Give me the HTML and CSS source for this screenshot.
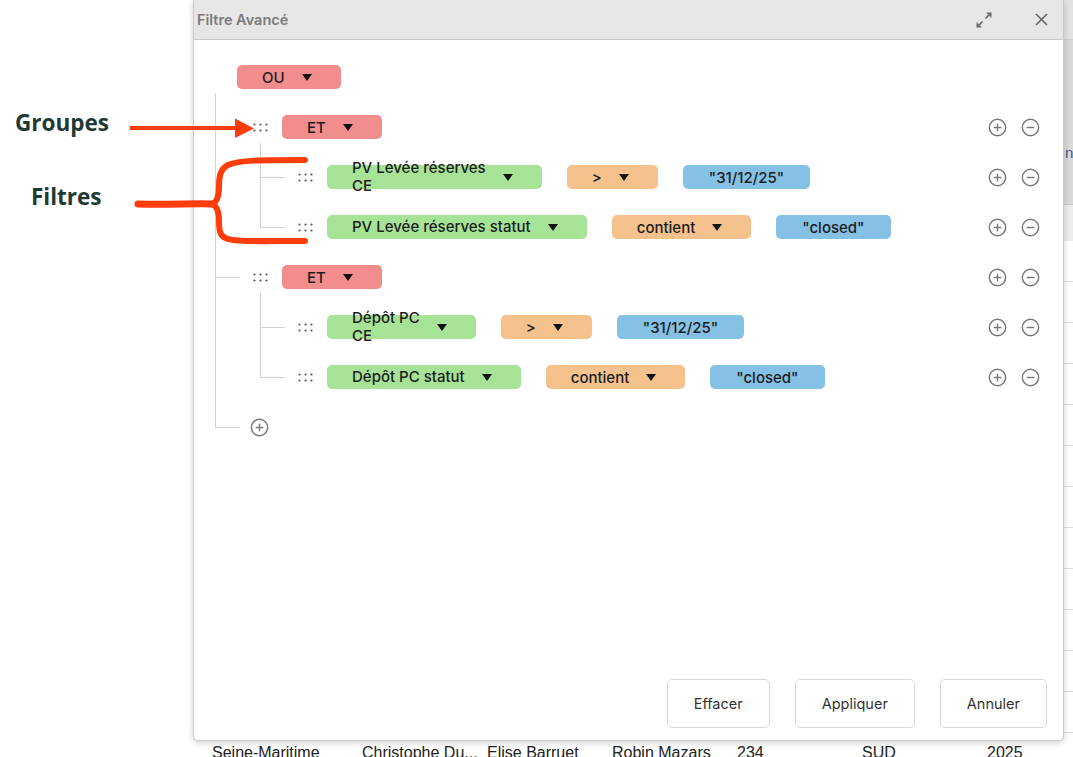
FILE: index.html
```html
<!DOCTYPE html>
<html lang="fr">
  <head>
    <meta charset="UTF-8" />
    <meta name="viewport" content="width=device-width, initial-scale=1.0" />
    <title>Filtre Avancé</title>
    <link rel="stylesheet" href="styles.css">
  </head>
  <body>
    <div class="screen">
      <!-- table behind the modal -->
      <div class="sheet">
        <div class="sheet-head">
          <div class="sheet-head-top"></div>
          <div class="sheet-head-main"><span class="sheet-head-label">n</span></div>
        </div>
        <div class="sheet-sub"></div>
        <div class="sheet-line"></div>
        <div class="sheet-line"></div>
        <div class="sheet-line"></div>
        <div class="sheet-line"></div>
        <div class="sheet-line"></div>
        <div class="sheet-line"></div>
        <div class="sheet-line"></div>
        <div class="sheet-line"></div>
        <div class="sheet-line"></div>
        <div class="sheet-line"></div>
        <div class="sheet-line"></div>
        <div class="sheet-line"></div>
        <div class="sheet-line sheet-line-last">
          <span class="cell cell-wide">Seine-Maritime</span>
          <span class="cell">Christophe Du...</span>
          <span class="cell">Elise Barruet</span>
          <span class="cell">Robin Mazars</span>
          <span class="cell">234</span>
          <span class="cell">SUD</span>
          <span class="cell">2025</span>
        </div>
      </div>

      <section class="dialog">
        <header class="dialog-header">
          <span class="dialog-title">Filtre Avancé</span>
          <div class="dialog-tools">
            <svg class="tool-expand" width="18" height="18" viewBox="0 0 18 18">
              <line x1="10.5" y1="7.5" x2="15" y2="3" />
              <polygon points="11,1.5 16.5,1.5 16.5,7" />
              <line x1="7.5" y1="10.5" x2="3" y2="15" />
              <polygon points="1.5,11 1.5,16.5 7,16.5" />
            </svg>
            <svg class="tool-close" width="13" height="13" viewBox="0 0 13 13">
              <line x1="1" y1="1" x2="12" y2="12" />
              <line x1="12" y1="1" x2="1" y2="12" />
            </svg>
          </div>
        </header>

        <div class="dialog-body">
          <div class="root-row">
            <span class="pill pill-group">OU <i class="caret"></i></span>
          </div>

          <ul class="tree">
            <li>
              <div class="tree-row">
                <svg class="handle" width="15" height="9" viewBox="0 0 15 9"><circle cx="1.5" cy="1.5" r="1.1"/><circle cx="7.5" cy="1.5" r="1.1"/><circle cx="13.5" cy="1.5" r="1.1"/><circle cx="1.5" cy="7.5" r="1.1"/><circle cx="7.5" cy="7.5" r="1.1"/><circle cx="13.5" cy="7.5" r="1.1"/></svg>
                <span class="pill pill-group">ET <i class="caret"></i></span>
                <div class="row-actions">
                  <svg class="circle-icon" width="19" height="19" viewBox="0 0 20 20"><circle cx="10" cy="10" r="8.6"/><line x1="10" y1="6" x2="10" y2="14"/><line x1="6" y1="10" x2="14" y2="10"/></svg>
                  <svg class="circle-icon" width="19" height="19" viewBox="0 0 20 20"><circle cx="10" cy="10" r="8.6"/><line x1="6" y1="10" x2="14" y2="10"/></svg>
                </div>
              </div>
              <ul class="tree tree-sub">
                <li>
                  <div class="tree-row">
                    <svg class="handle" width="15" height="9" viewBox="0 0 15 9"><circle cx="1.5" cy="1.5" r="1.1"/><circle cx="7.5" cy="1.5" r="1.1"/><circle cx="13.5" cy="1.5" r="1.1"/><circle cx="1.5" cy="7.5" r="1.1"/><circle cx="7.5" cy="7.5" r="1.1"/><circle cx="13.5" cy="7.5" r="1.1"/></svg>
                    <div class="filter">
                      <span class="pill pill-field"><span class="pill-text">PV Levée réserves<br>CE</span> <i class="caret"></i></span>
                      <span class="pill pill-op">&gt; <i class="caret"></i></span>
                      <span class="pill pill-value">"31/12/25"</span>
                    </div>
                    <div class="row-actions">
                      <svg class="circle-icon" width="19" height="19" viewBox="0 0 20 20"><circle cx="10" cy="10" r="8.6"/><line x1="10" y1="6" x2="10" y2="14"/><line x1="6" y1="10" x2="14" y2="10"/></svg>
                      <svg class="circle-icon" width="19" height="19" viewBox="0 0 20 20"><circle cx="10" cy="10" r="8.6"/><line x1="6" y1="10" x2="14" y2="10"/></svg>
                    </div>
                  </div>
                </li>
                <li>
                  <div class="tree-row">
                    <svg class="handle" width="15" height="9" viewBox="0 0 15 9"><circle cx="1.5" cy="1.5" r="1.1"/><circle cx="7.5" cy="1.5" r="1.1"/><circle cx="13.5" cy="1.5" r="1.1"/><circle cx="1.5" cy="7.5" r="1.1"/><circle cx="7.5" cy="7.5" r="1.1"/><circle cx="13.5" cy="7.5" r="1.1"/></svg>
                    <div class="filter">
                      <span class="pill pill-field"><span class="pill-text">PV Levée réserves statut</span> <i class="caret"></i></span>
                      <span class="pill pill-op">contient <i class="caret"></i></span>
                      <span class="pill pill-value">"closed"</span>
                    </div>
                    <div class="row-actions">
                      <svg class="circle-icon" width="19" height="19" viewBox="0 0 20 20"><circle cx="10" cy="10" r="8.6"/><line x1="10" y1="6" x2="10" y2="14"/><line x1="6" y1="10" x2="14" y2="10"/></svg>
                      <svg class="circle-icon" width="19" height="19" viewBox="0 0 20 20"><circle cx="10" cy="10" r="8.6"/><line x1="6" y1="10" x2="14" y2="10"/></svg>
                    </div>
                  </div>
                </li>
              </ul>
            </li>

            <li>
              <div class="tree-row">
                <svg class="handle" width="15" height="9" viewBox="0 0 15 9"><circle cx="1.5" cy="1.5" r="1.1"/><circle cx="7.5" cy="1.5" r="1.1"/><circle cx="13.5" cy="1.5" r="1.1"/><circle cx="1.5" cy="7.5" r="1.1"/><circle cx="7.5" cy="7.5" r="1.1"/><circle cx="13.5" cy="7.5" r="1.1"/></svg>
                <span class="pill pill-group">ET <i class="caret"></i></span>
                <div class="row-actions">
                  <svg class="circle-icon" width="19" height="19" viewBox="0 0 20 20"><circle cx="10" cy="10" r="8.6"/><line x1="10" y1="6" x2="10" y2="14"/><line x1="6" y1="10" x2="14" y2="10"/></svg>
                  <svg class="circle-icon" width="19" height="19" viewBox="0 0 20 20"><circle cx="10" cy="10" r="8.6"/><line x1="6" y1="10" x2="14" y2="10"/></svg>
                </div>
              </div>
              <ul class="tree tree-sub">
                <li>
                  <div class="tree-row">
                    <svg class="handle" width="15" height="9" viewBox="0 0 15 9"><circle cx="1.5" cy="1.5" r="1.1"/><circle cx="7.5" cy="1.5" r="1.1"/><circle cx="13.5" cy="1.5" r="1.1"/><circle cx="1.5" cy="7.5" r="1.1"/><circle cx="7.5" cy="7.5" r="1.1"/><circle cx="13.5" cy="7.5" r="1.1"/></svg>
                    <div class="filter">
                      <span class="pill pill-field"><span class="pill-text">Dépôt PC<br>CE</span> <i class="caret"></i></span>
                      <span class="pill pill-op">&gt; <i class="caret"></i></span>
                      <span class="pill pill-value">"31/12/25"</span>
                    </div>
                    <div class="row-actions">
                      <svg class="circle-icon" width="19" height="19" viewBox="0 0 20 20"><circle cx="10" cy="10" r="8.6"/><line x1="10" y1="6" x2="10" y2="14"/><line x1="6" y1="10" x2="14" y2="10"/></svg>
                      <svg class="circle-icon" width="19" height="19" viewBox="0 0 20 20"><circle cx="10" cy="10" r="8.6"/><line x1="6" y1="10" x2="14" y2="10"/></svg>
                    </div>
                  </div>
                </li>
                <li>
                  <div class="tree-row">
                    <svg class="handle" width="15" height="9" viewBox="0 0 15 9"><circle cx="1.5" cy="1.5" r="1.1"/><circle cx="7.5" cy="1.5" r="1.1"/><circle cx="13.5" cy="1.5" r="1.1"/><circle cx="1.5" cy="7.5" r="1.1"/><circle cx="7.5" cy="7.5" r="1.1"/><circle cx="13.5" cy="7.5" r="1.1"/></svg>
                    <div class="filter">
                      <span class="pill pill-field"><span class="pill-text">Dépôt PC statut</span> <i class="caret"></i></span>
                      <span class="pill pill-op">contient <i class="caret"></i></span>
                      <span class="pill pill-value">"closed"</span>
                    </div>
                    <div class="row-actions">
                      <svg class="circle-icon" width="19" height="19" viewBox="0 0 20 20"><circle cx="10" cy="10" r="8.6"/><line x1="10" y1="6" x2="10" y2="14"/><line x1="6" y1="10" x2="14" y2="10"/></svg>
                      <svg class="circle-icon" width="19" height="19" viewBox="0 0 20 20"><circle cx="10" cy="10" r="8.6"/><line x1="6" y1="10" x2="14" y2="10"/></svg>
                    </div>
                  </div>
                </li>
              </ul>
            </li>

            <li>
              <div class="tree-row tree-row-add">
                <svg class="circle-icon" width="19" height="19" viewBox="0 0 20 20"><circle cx="10" cy="10" r="8.6"/><line x1="10" y1="6" x2="10" y2="14"/><line x1="6" y1="10" x2="14" y2="10"/></svg>
              </div>
            </li>
          </ul>
        </div>

        <footer class="dialog-footer">
          <button class="footer-button">Effacer</button>
          <button class="footer-button">Appliquer</button>
          <button class="footer-button">Annuler</button>
        </footer>
      </section>

      <!-- annotations drawn on top of the screenshot -->
      <div class="note note-groupes">Groupes</div>
      <div class="note note-filtres">Filtres</div>
      <svg class="marks" width="320" height="260" viewBox="0 0 320 260">
        <line class="mark-line" x1="130" y1="128" x2="238" y2="128" />
        <polygon class="mark-head" points="235,118.5 254,128.5 235,138" />
        <path class="mark-brace" d="M305,160 C262,160 238,160 228,165 C220,169 219,177 219,187 C219,197 217,202 212,204 C217,206 219,211 219,221 C219,231 220,237 228,239 C238,242 262,241 305,241" />
        <path class="mark-arm" d="M138,204 C170,205 196,203 214,204" />
      </svg>
    </div>
  </body>
</html>
```

FILE: styles.css
```css
* {
  margin: 0;
  padding: 0;
  box-sizing: border-box;
}

body {
  width: 1073px;
  height: 757px;
  overflow: hidden;
  background-color: #ffffff;
  font-family: "Inter", "Liberation Sans", sans-serif;
  color: #1f1f1f;
}

.screen {
  position: relative;
  width: 1073px;
  height: 757px;
  overflow: hidden;
}

/* ---- table in the background ---- */

.sheet {
  margin-left: 193px;
  width: 880px;
}

.sheet-head-top {
  height: 40px;
  background-color: #e2e2e2;
  border-bottom: 1px solid #cfcfcf;
}

.sheet-head-main {
  height: 165px;
  background-color: #d9d9d9;
  border-bottom: 1px solid #c6c6c6;
  padding: 102px 0 0 872px;
}

.sheet-head-label {
  font-family: "Liberation Sans", sans-serif;
  font-size: 15px;
  color: #3b5c8a;
}

.sheet-sub {
  height: 36px;
  background-color: #ececec;
}

.sheet-line {
  height: 41px;
  border-bottom: 1px solid #dedede;
}

.sheet-line-last {
  display: flex;
  padding: 11px 0 0 19px;
  border-bottom: none;
  font-family: "Liberation Sans", sans-serif;
  font-size: 16px;
  line-height: 18px;
  color: #222222;
}

.cell {
  flex-shrink: 0;
  width: 125px;
  white-space: nowrap;
}

.cell-wide {
  width: 150px;
}

/* ---- dialog ---- */

.dialog {
  position: absolute;
  left: 193px;
  top: 0;
  width: 871px;
  height: 741px;
  display: flex;
  flex-direction: column;
  background-color: #ffffff;
  border: 1px solid #c9c9c9;
  border-top: none;
  border-radius: 0 0 5px 5px;
  box-shadow: 0 2px 6px rgba(0, 0, 0, 0.18);
}

.dialog-header {
  height: 40px;
  display: flex;
  align-items: center;
  padding: 0 15px 0 3px;
  background-color: #e6e6e6;
  border-bottom: 1px solid #c9c9c9;
}

.dialog-title {
  font-size: 14.5px;
  font-weight: 600;
  color: #7b7b7b;
}

.dialog-tools {
  margin-left: auto;
  display: flex;
  align-items: center;
  gap: 42px;
}

.tool-expand line {
  stroke: #6f6f6f;
  stroke-width: 1.7;
}

.tool-expand polygon {
  fill: #6f6f6f;
}

.tool-close line {
  stroke: #666666;
  stroke-width: 1.6;
}

.dialog-body {
  flex: 1;
  padding: 12px 23px 0 21px;
}

.root-row {
  height: 50px;
  display: flex;
  align-items: center;
  padding-left: 22px;
}

/* ---- tree ---- */

.tree {
  list-style: none;
  position: relative;
}

.tree::before {
  content: "";
  position: absolute;
  left: 0;
  top: -9px;
  bottom: 25px;
  border-left: 1px solid #d2d2d2;
}

.tree-sub {
  margin-left: 45px;
}

.tree-row {
  position: relative;
  height: 50px;
  display: flex;
  align-items: center;
  padding-left: 38px;
}

.tree-row::before {
  content: "";
  position: absolute;
  left: 0;
  top: 25px;
  width: 25px;
  border-top: 1px solid #d2d2d2;
}

.tree-row-add {
  padding-left: 35px;
}

.handle {
  flex-shrink: 0;
  margin-right: 14px;
  fill: #555555;
}

.filter {
  display: flex;
  align-items: center;
  gap: 25px;
}

.pill {
  height: 24px;
  display: inline-flex;
  align-items: center;
  gap: 17px;
  padding: 0 29px 0 25px;
  border-radius: 5px;
  font-size: 15px;
  font-weight: 500;
  color: #1c1c1c;
  white-space: nowrap;
}

.pill-text {
  line-height: 18px;
}

.pill-group {
  background-color: #f28d8d;
}

.pill-field {
  background-color: #a7e397;
}

.pill-op {
  background-color: #f5c18d;
}

.pill-value {
  background-color: #85c0e5;
  padding: 0 26px;
}

.caret {
  width: 0;
  height: 0;
  border-left: 5.5px solid transparent;
  border-right: 5.5px solid transparent;
  border-top: 7px solid #111111;
}

.row-actions {
  margin-left: auto;
  display: flex;
  align-items: center;
  gap: 14px;
}

.circle-icon circle {
  fill: none;
  stroke: #777777;
  stroke-width: 1.5;
}

.circle-icon line {
  stroke: #777777;
  stroke-width: 1.5;
}

/* ---- footer ---- */

.dialog-footer {
  display: flex;
  justify-content: flex-end;
  gap: 25px;
  padding: 0 16px 12px 0;
}

.footer-button {
  height: 49px;
  padding: 0 26px;
  background-color: #ffffff;
  border: 1px solid #d9d9d9;
  border-radius: 5px;
  font-family: "Inter", "Liberation Sans", sans-serif;
  font-size: 14.5px;
  color: #333333;
}

/* ---- annotations ---- */

.note {
  position: absolute;
  font-family: "Open Sans", sans-serif;
  font-weight: 700;
  font-size: 22.5px;
  color: #1f3a34;
}

.note-groupes {
  left: 15px;
  top: 107px;
}

.note-filtres {
  left: 31px;
  top: 181px;
}

.marks {
  position: absolute;
  left: 0;
  top: 0;
}

.mark-line {
  stroke: #ff3d0a;
  stroke-width: 4;
}

.mark-head {
  fill: #ff3d0a;
}

.mark-brace {
  fill: none;
  stroke: #ff3d0a;
  stroke-width: 6;
  stroke-linecap: round;
  stroke-linejoin: round;
}

.mark-arm {
  fill: none;
  stroke: #ff3d0a;
  stroke-width: 7;
  stroke-linecap: round;
}
```
